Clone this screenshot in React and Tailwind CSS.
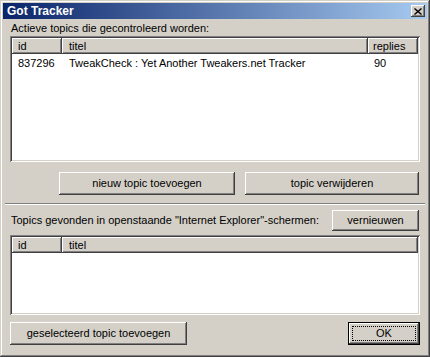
export default function App() {
  const font = { fontFamily: '"Liberation Sans", Arial, sans-serif' };
  const raised =
    "shadow-[inset_-1px_-1px_0_#404040,inset_1px_1px_0_#ffffff,inset_-2px_-2px_0_#808080,inset_2px_2px_0_#d4d0c8]";
  const sunken =
    "shadow-[inset_1px_1px_0_#808080,inset_-1px_-1px_0_#ffffff,inset_2px_2px_0_#404040,inset_-2px_-2px_0_#d4d0c8]";
  return (
    <div
      className="w-[430px] h-[357px] bg-[#d4d0c8] p-[3px] flex flex-col text-[11px] text-black leading-[13px] shadow-[inset_-1px_-1px_0_#404040,inset_1px_1px_0_#d4d0c8,inset_-2px_-2px_0_#808080,inset_2px_2px_0_#ffffff]"
      style={font}
    >
      {/* caption */}
      <div className="h-[16px] flex items-center justify-between bg-[linear-gradient(to_right,#0a246a,#a6caf0)] pl-[4px] pr-[2px]">
        <span className="text-white font-bold text-[12px]">Got Tracker</span>
        <div
          className={`w-[14px] h-[12px] bg-[#d4d0c8] ${raised} flex items-center justify-center`}
        >
          <svg width="8" height="7" viewBox="0 0 8 7">
            <path d="M0.5 0.5 L7.5 6.5 M7.5 0.5 L0.5 6.5" stroke="#000" strokeWidth="1.4" />
          </svg>
        </div>
      </div>

      <div className="flex flex-col px-[7px]">
        <div className="mt-[3px] h-[13px] pl-[1px]">Actieve topics die gecontroleerd worden:</div>

        {/* list 1 */}
        <div className={`mt-[1px] h-[126px] bg-white p-[2px] ${sunken}`}>
          <div className="flex h-[16px]">
            <div className={`w-[50px] bg-[#d4d0c8] ${raised} pl-[6px] flex items-center`}>id</div>
            <div className={`w-[306px] bg-[#d4d0c8] ${raised} pl-[7px] flex items-center`}>titel</div>
            <div className={`w-[50px] bg-[#d4d0c8] ${raised} pl-[5px] flex items-center`}>replies</div>
          </div>
          <div className="flex h-[15px] items-center mt-[2px]">
            <div className="w-[50px] pl-[6px]">837296</div>
            <div className="w-[306px] pl-[7px]">TweakCheck : Yet Another Tweakers.net Tracker</div>
            <div className="w-[50px] pl-[6px]">90</div>
          </div>
        </div>

        {/* buttons */}
        <div className="mt-[10px] h-[23px] flex gap-[10px] pl-[49px]">
          <div className={`w-[176px] h-full ${raised} flex items-center justify-center`}>
            nieuw topic toevoegen
          </div>
          <div className={`w-[174px] h-full ${raised} flex items-center justify-center`}>
            topic verwijderen
          </div>
        </div>

        {/* separator */}
        <div className="mt-[8px] -mx-[5px] h-[2px] border-t border-t-[#808080] border-b border-b-white" />

        {/* row 2 */}
        <div className="mt-[5px] h-[21px] flex items-center justify-between">
          <div className="pl-[1px]">Topics gevonden in openstaande "Internet Explorer"-schermen:</div>
          <div className={`w-[87px] h-full mr-[1px] ${raised} flex items-center justify-center`}>
            vernieuwen
          </div>
        </div>

        {/* list 2 */}
        <div className={`mt-[4px] h-[80px] bg-white p-[2px] ${sunken}`}>
          <div className="flex h-[16px]">
            <div className={`w-[50px] bg-[#d4d0c8] ${raised} pl-[6px] flex items-center`}>id</div>
            <div className={`flex-1 bg-[#d4d0c8] ${raised} pl-[7px] flex items-center`}>titel</div>
          </div>
        </div>

        {/* bottom buttons */}
        <div className="mt-[7px] h-[23px] flex justify-between">
          <div className={`w-[177px] h-full ${raised} flex items-center justify-center`}>
            geselecteerd topic toevoegen
          </div>
          <div className="w-[72px] h-full border border-black">
            <div className={`w-full h-full ${raised} p-[3px]`}>
              <div className="w-full h-full border border-dotted border-black flex items-center justify-center">
                OK
              </div>
            </div>
          </div>
        </div>
      </div>
    </div>
  );
}
